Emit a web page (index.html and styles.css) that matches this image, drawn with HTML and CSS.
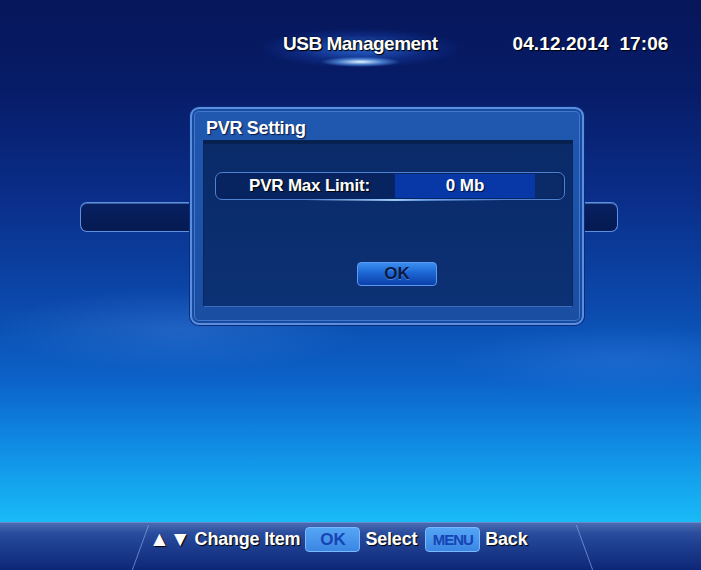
FILE: index.html
```html
<!DOCTYPE html>
<html>
<head>
<meta charset="utf-8">
<link rel="stylesheet" href="styles.css">
</head>
<body>
<div class="screen">
  <header class="topbar">
    <div class="page-title">USB Management</div>
    <div class="clock">04.12.2014&nbsp;&nbsp;17:06</div>
  </header>
  <main class="stage">
    <div class="side-bar side-left"></div>
    <section class="dialog">
      <div class="dialog-title">PVR Setting</div>
      <div class="dialog-body">
        <div class="field-row">
          <div class="field-label">PVR Max Limit:</div>
          <div class="field-value">0 Mb</div>
          <div class="field-tail"></div>
        </div>
        <div class="btn-wrap"><div class="ok-btn">OK</div></div>
      </div>
    </section>
    <div class="side-bar side-right"></div>
  </main>
  <footer class="helpbar">
    <span class="arrows">▲▼</span>
    <span class="help-text">Change Item</span>
    <span class="key key-ok">OK</span>
    <span class="help-text">Select</span>
    <span class="key key-menu">MENU</span>
    <span class="help-text">Back</span>
  </footer>
</div>
</body>
</html>
```
FILE: styles.css
```css
* { box-sizing: border-box; }
html, body { margin: 0; padding: 0; }
body {
  width: 701px;
  height: 570px;
  overflow: hidden;
  font-family: "Liberation Sans", Arial, sans-serif;
  font-weight: bold;
  color: #fff;
}
.screen {
  width: 701px;
  height: 570px;
  display: flex;
  flex-direction: column;
  background:
    radial-gradient(ellipse 260px 60px at 180px 330px, rgba(90,150,240,0.25), transparent 70%),
    radial-gradient(ellipse 240px 50px at 620px 360px, rgba(70,140,240,0.25), transparent 70%),
    linear-gradient(180deg, #06165a 0px, #071c68 90px, #0a2e8a 200px, #0b48aa 300px, #0c62c8 380px, #0f88e2 440px, #16aef2 500px, #19baf6 522px);
}
.topbar {
  height: 80px;
  display: flex;
  align-items: flex-start;
  padding: 24px 0 0 262px;
}
.page-title {
  font-size: 19px;
  line-height: 20px;
  letter-spacing: -0.5px;
  padding: 10px 21px 14px 21px;
  text-shadow: 1px 1px 1px #000, 0 0 2px #000;
  background:
    radial-gradient(ellipse 40px 5px at 50% 86%, rgba(230,245,255,1), rgba(110,180,255,0.6) 55%, transparent 100%),
    radial-gradient(ellipse 100px 20px at 50% 55%, rgba(50,120,235,0.8), rgba(25,70,180,0.35) 65%, transparent 100%);
}
.clock {
  margin-left: 54px;
  padding-top: 10px;
  font-size: 19px;
  line-height: 20px;
  letter-spacing: 0.1px;
  text-shadow: 1px 1px 1px #000;
}
.stage {
  flex: 1;
  display: flex;
  align-items: flex-start;
  padding: 27px 0 0 80px;
}
.side-bar {
  height: 30px;
  margin-top: 95px;
  background: linear-gradient(180deg, #072060, #051a52);
  border: 1px solid #5d90e0;
  box-shadow: inset 0 1px 0 rgba(140,190,255,0.4);
}
.side-left {
  width: 112px;
  border-right: none;
  border-radius: 7px 0 0 7px;
  margin-right: -2px;
}
.side-right {
  width: 36px;
  border-left: none;
  border-radius: 0 7px 7px 0;
  margin-left: -2px;
}
.dialog {
  position: relative;
  z-index: 1;
  width: 394px;
  height: 218px;
  border: 2px solid #5a8ee0;
  border-radius: 9px;
  background: linear-gradient(180deg, #2058b0 0%, #1a4ea2 100%);
  box-shadow: inset 0 0 0 2px #194a9e, inset 0 0 0 3px #3e78cf, 0 0 0 1px #0b2a78;
  display: flex;
  flex-direction: column;
}
.dialog-title {
  height: 31px;
  padding: 9px 0 0 14px;
  font-size: 18px;
  line-height: 20px;
  letter-spacing: -0.3px;
  text-shadow: 1px 1px 1px #0a1640;
}
.dialog-body {
  margin: 0 9px 0 11px;
  height: 167px;
  background: linear-gradient(180deg, #0a2a68, #0c3174);
  border-top: 4px solid #062050;
  border-left: 1px solid #0a2860;
  border-right: 1px solid #0a2860;
  border-bottom: 1px solid #3a6cc0;
  padding: 28px 7px 0 11px;
}
.field-row {
  position: relative;
  height: 28px;
  display: flex;
  border: 1px solid #4f82d0;
  border-radius: 7px;
  background: #082460;
}
.field-row::after {
  content: "";
  position: absolute;
  left: 90px;
  right: 60px;
  bottom: -2px;
  height: 2px;
  background: linear-gradient(90deg, transparent, rgba(170,215,255,0.9) 45%, rgba(120,180,255,0.7) 60%, transparent);
}
.field-label {
  width: 179px;
  text-align: center;
  font-size: 17px;
  line-height: 26px;
  padding-left: 8px;
  letter-spacing: -0.2px;
  text-shadow: 1px 1px 1px #000;
}
.field-value {
  width: 140px;
  background: #0838a8;
  text-align: center;
  font-size: 17px;
  line-height: 24px;
  margin: 1px 0;
  text-shadow: 1px 1px 1px #021040;
}
.field-tail {
  flex: 1;
  background: #0b2a68;
  margin: 1px 2px 1px 0;
  border-radius: 0 6px 6px 0;
}
.btn-wrap {
  display: flex;
  justify-content: center;
  padding-left: 14px;
  margin-top: 62px;
}
.ok-btn {
  width: 80px;
  height: 24px;
  border-radius: 4px;
  border: 1px solid #5a9af0;
  background: linear-gradient(180deg, #3a8ef0 0%, #1c66d4 45%, #0c3fa8 100%);
  color: #0a1a44;
  font-size: 17px;
  line-height: 22px;
  text-align: center;
  text-shadow: 0 1px 0 rgba(120,180,255,0.5);
}
.helpbar {
  position: relative;
  height: 48px;
  display: flex;
  align-items: flex-start;
  padding: 4px 0 0 149px;
  background: linear-gradient(180deg, #4b6bb4 0px, #3a5ca8 5px, #2a4d9e 10px, #1d3d8e 24px, #0d2676 48px);
  border-top: 1px solid #6a8ccc;
}
.helpbar::before,
.helpbar::after {
  content: "";
  position: absolute;
  top: 2px;
  bottom: 0;
  width: 1px;
  background: rgba(150,180,240,0.6);
}
.helpbar::before { left: 140px; transform: skewX(-20deg); }
.helpbar::after { left: 584px; transform: skewX(20deg); }
.arrows {
  font-size: 21px;
  line-height: 24px;
  letter-spacing: 0;
  margin-right: 4px;
  text-shadow: 1px 1px 1px #000;
}
.help-text {
  font-size: 18px;
  line-height: 24px;
  letter-spacing: -0.2px;
  text-shadow: 1px 1px 1px #000;
}
.key {
  height: 25px;
  border-radius: 4px;
  border: 1px solid #7ab8ff;
  background: linear-gradient(180deg, #55a6f5, #3a86e4);
  color: #1744b4;
  font-size: 17px;
  line-height: 23px;
  text-align: center;
  margin: 0 5px;
}
.key-ok { width: 55px; }
.key-menu { width: 55px; font-size: 15px; letter-spacing: -1px; margin-left: 8px; }
```
